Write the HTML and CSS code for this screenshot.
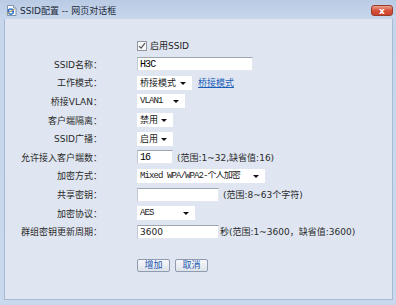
FILE: index.html
```html
<!DOCTYPE html>
<html lang="zh-CN">
<head>
    <meta charset="UTF-8">
    <title>SSID配置 -- 网页对话框</title>
    <link rel="stylesheet" href="styles.css">
</head>
<body>
    <div class="window">
        <div class="titlebar">
            <svg class="app-icon" width="11" height="11" viewBox="0 0 11 11">
                <path d="M1.5 0.5h6l2.5 2.5v7.5h-8.5z" fill="#fbfdff" stroke="#7e93ad"/>
                <path d="M7.5 0.5v2.5h2.5" fill="#dfe8f3" stroke="#7e93ad"/>
                <circle cx="4.8" cy="6.6" r="2.6" fill="none" stroke="#2f74c9" stroke-width="1.4"/>
                <path d="M2.6 6.4h4.6" stroke="#2f74c9" stroke-width="1"/>
                <path d="M0.6 9.2c2-1.6 5-3.6 8.2-5" stroke="#e8a93a" stroke-width="0.9" fill="none"/>
            </svg>
            <span class="title">SSID配置 -- 网页对话框</span>
            <button class="close" type="button">x</button>
        </div>

        <div class="panel">
            <form class="form">
                <div class="label"></div>
                <div class="field">
                    <label class="check">
                        <span class="box">
                            <svg width="8" height="8" viewBox="0 0 8 8"><path d="M1 4.2l2 2L7 1.2" fill="none" stroke="#555" stroke-width="1.2"/></svg>
                        </span>
                        启用SSID
                    </label>
                </div>

                <div class="label">SSID名称：</div>
                <div class="field"><input class="text mono w-name" type="text" value="H3C"></div>

                <div class="label">工作模式：</div>
                <div class="field">
                    <span class="sel w-mode"><select><option>桥接模式</option></select></span>
                    <a href="#" class="link">桥接模式</a>
                </div>

                <div class="label">桥接VLAN：</div>
                <div class="field"><span class="sel mono w-vlan"><select><option>VLAN1</option></select></span></div>

                <div class="label">客户端隔离：</div>
                <div class="field"><span class="sel w-short"><select><option>禁用</option></select></span></div>

                <div class="label">SSID广播：</div>
                <div class="field"><span class="sel w-short"><select><option>启用</option></select></span></div>

                <div class="label">允许接入客户端数：</div>
                <div class="field">
                    <input class="text mono w-short" type="text" value="16">
                    <span class="hint">(范围:1~32,缺省值:16)</span>
                </div>

                <div class="label">加密方式：</div>
                <div class="field"><span class="sel mono w-enc"><select><option>Mixed WPA/WPA2-个人加密</option></select></span></div>

                <div class="label">共享密钥：</div>
                <div class="field">
                    <input class="text w-key" type="password" value="">
                    <span class="hint">(范围:8~63个字符)</span>
                </div>

                <div class="label">加密协议：</div>
                <div class="field"><span class="sel mono w-aes"><select><option>AES</option></select></span></div>

                <div class="label">群组密钥更新周期：</div>
                <div class="field">
                    <input class="text w-key" type="text" value="3600">
                    <span class="hint tight">秒(范围:1~3600，缺省值:3600)</span>
                </div>
            </form>

            <div class="actions">
                <button type="button" class="btn">增加</button>
                <button type="button" class="btn">取消</button>
            </div>
        </div>
    </div>
</body>
</html>
```

FILE: styles.css
```css
html, body {
    margin: 0;
    padding: 0;
}

body {
    font-family: "DejaVu Sans", "Noto Sans CJK SC", sans-serif;
    font-size: 9px;
    color: #222;
    background-color: #c9d8ec;
}

.window {
    width: 396px;
    height: 305px;
    display: flex;
    flex-direction: column;
    background: linear-gradient(#b9cbe4, #c7d6eb 18px, #c9d8ec);
}

/* title bar */
.titlebar {
    height: 19px;
    display: flex;
    align-items: center;
    padding: 0 3px 0 6px;
}

.app-icon {
    margin-right: 3px;
    margin-top: 2px;
}

.title {
    color: #1e2a3a;
    margin-top: 2px;
}

.close {
    margin-left: auto;
    width: 22px;
    height: 11px;
    padding: 0;
    border: 1px solid #9a3c2c;
    border-radius: 3px;
    background: linear-gradient(#eba08e, #d6533a 50%, #c8432b);
    color: white;
    font-family: "DejaVu Sans", sans-serif;
    font-size: 9px;
    font-weight: bold;
    line-height: 8px;
    margin-top: 2px;
}

/* content panel */
.panel {
    flex: 1;
    margin: 0 3px 5px 4px;
    border: 1px solid #a6bad6;
    border-top: none;
    background-color: #dfe6f1;
    padding-top: 17.2px;
}

.form {
    display: grid;
    grid-template-columns: 97px 1fr;
    grid-auto-rows: 18.65px;
    column-gap: 35px;
    margin: 0;
}

.label {
    text-align: right;
    display: flex;
    align-items: center;
    justify-content: flex-end;
    color: #2a2a2a;
    white-space: nowrap;
}

.field {
    display: flex;
    align-items: center;
    white-space: nowrap;
}

.check {
    display: flex;
    align-items: center;
    color: #1d1d1d;
}

.check .box {
    width: 8px;
    height: 8px;
    border: 1px solid #8e969f;
    background: #f7f7f7;
    margin-right: 3px;
    display: flex;
    align-items: center;
    justify-content: center;
}

.text {
    box-sizing: border-box;
    height: 14px;
    padding: 0 2px;
    border: 1px solid #e4e8ee;
    border-top-color: #9ea6b0;
    border-left-color: #c2c8d0;
    background: white;
    font-family: "DejaVu Sans", sans-serif;
    font-size: 9px;
    color: #222;
    outline: none;
}

.mono,
.mono select {
    font-family: "Liberation Mono", "Noto Sans CJK SC", monospace;
    font-size: 10px;
    letter-spacing: -0.9px;
    color: #000;
}

.sel {
    position: relative;
    display: inline-block;
    box-sizing: border-box;
    height: 14px;
    background: white;
}

.sel select {
    appearance: none;
    -webkit-appearance: none;
    width: 100%;
    height: 14px;
    border: none;
    background: transparent;
    padding: 0 0 0 3px;
    font-size: 9px;
    color: #222;
    outline: none;
}

.sel::after {
    content: "";
    position: absolute;
    right: 6px;
    top: 6px;
    border-left: 3px solid transparent;
    border-right: 3px solid transparent;
    border-top: 3px solid #111;
}

.w-name { width: 116px; }
.w-mode { width: 55px; }
.w-vlan { width: 48px; }
.w-short { width: 36px; }
.w-enc { width: 128px; }
.w-key { width: 82px; }
.w-aes { width: 58px; }

.link {
    margin-left: 6px;
    color: #1b5eb8;
    text-decoration: underline;
}

.hint {
    margin-left: 4px;
    color: #2a2a2a;
}

.hint.tight {
    margin-left: 1px;
}

/* buttons */
.actions {
    display: flex;
    gap: 5px;
    margin: 17.6px 0 0 132px;
}

.btn {
    height: 13px;
    width: 33px;
    padding: 0;
    border: 1px solid #8e9bb0;
    border-radius: 2px;
    background: linear-gradient(#f6f7f9, #dde2e9);
    color: #2457b0;
    font-family: "DejaVu Sans", "Noto Sans CJK SC", sans-serif;
    font-size: 9px;
    line-height: 11px;
}
```
